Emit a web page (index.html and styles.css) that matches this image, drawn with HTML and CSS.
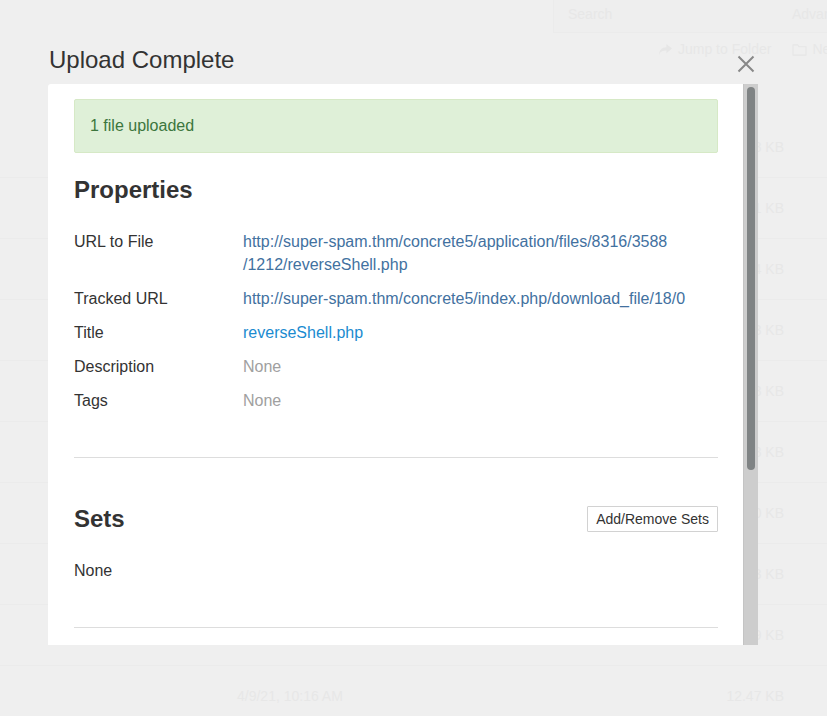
FILE: index.html
```html
<!DOCTYPE html>
<html>
<head>
<meta charset="utf-8">
<link rel="stylesheet" href="styles.css">
</head>
<body>
<div class="page">
  <div class="topbar">
    <div class="search">
      <span class="search-text">Search</span>
      <span>Advanced</span>
    </div>
  </div>
  <div class="toolbar">
    <span class="tool">
      <svg width="15" height="13" viewBox="0 0 16 14"><path d="M9 1 L15 6 L9 11 L9 8 C5 8 2 9 1 13 C1 8 4 4.5 9 4.5 Z" fill="#e6e6e6"/></svg>
      Jump to Folder
    </span>
    <span class="tool">
      <svg width="15" height="13" viewBox="0 0 16 14"><path d="M1 2 H6 L7.5 4 H15 V13 H1 Z" fill="none" stroke="#e6e6e6" stroke-width="1.2"/></svg>
      New Folder
    </span>
  </div>
  <div class="rows">
    <div class="frow"><span class="date hidden">4/9/21, 10:16 AM</span><span class="size">11.08 KB</span></div>
    <div class="frow"><span class="date hidden">4/9/21, 10:16 AM</span><span class="size">14.31 KB</span></div>
    <div class="frow"><span class="date hidden">4/9/21, 10:16 AM</span><span class="size">10.84 KB</span></div>
    <div class="frow"><span class="date hidden">4/9/21, 10:16 AM</span><span class="size">12.93 KB</span></div>
    <div class="frow"><span class="date hidden">4/9/21, 10:16 AM</span><span class="size">13.08 KB</span></div>
    <div class="frow"><span class="date hidden">4/9/21, 10:16 AM</span><span class="size">15.28 KB</span></div>
    <div class="frow"><span class="date hidden">4/9/21, 10:16 AM</span><span class="size">12.70 KB</span></div>
    <div class="frow"><span class="date hidden">4/9/21, 10:16 AM</span><span class="size">11.43 KB</span></div>
    <div class="frow"><span class="date hidden">4/9/21, 10:16 AM</span><span class="size">13.69 KB</span></div>
    <div class="frow last"><span class="date">4/9/21, 10:16 AM</span><span class="size">12.47 KB</span></div>
  </div>
</div>

<div class="modal">
  <div class="modal-header">
    <h2 class="modal-title">Upload Complete</h2>
    <svg class="close" width="18" height="18" viewBox="0 0 18 18"><path d="M1.5 1.5 L16.5 16.5 M16.5 1.5 L1.5 16.5" stroke="#888" stroke-width="2" fill="none"/></svg>
  </div>
  <div class="modal-body">
    <div class="content">
      <div class="alert">1 file uploaded</div>
      <h3 class="section-title">Properties</h3>
      <div class="prop">
        <div class="label">URL to File</div>
        <div class="value"><a class="link">http://super-spam.thm/concrete5/application/files/8316/3588<wbr>/1212/reverseShell.php</a></div>
      </div>
      <div class="prop">
        <div class="label">Tracked URL</div>
        <div class="value"><a class="link">http://super-spam.thm/concrete5/index.php/download_file/18/0</a></div>
      </div>
      <div class="prop">
        <div class="label">Title</div>
        <div class="value"><a class="link editable">reverseShell.php</a></div>
      </div>
      <div class="prop">
        <div class="label">Description</div>
        <div class="value muted">None</div>
      </div>
      <div class="prop">
        <div class="label">Tags</div>
        <div class="value muted">None</div>
      </div>
      <hr class="divider first">
      <div class="sets-head">
        <h3 class="section-title">Sets</h3>
        <button class="btn">Add/Remove Sets</button>
      </div>
      <div class="sets-none">None</div>
      <hr class="divider second">
    </div>
    <div class="scrollbar"><div class="thumb"></div></div>
  </div>
</div>
</body>
</html>
```
FILE: styles.css
```css
html, body {
  margin: 0;
  padding: 0;
}
body {
  background: #efefef;
  font-family: "Liberation Sans", Arial, sans-serif;
  color: #333;
  position: relative;
  width: 827px;
  height: 716px;
  overflow: hidden;
}

/* faint background page */
.page {
  color: #e7e7e7;
  font-size: 14px;
  width: 827px;
}
.topbar {
  display: flex;
  justify-content: flex-end;
  height: 34px;
}
.search {
  width: 274px;
  height: 33px;
  border-left: 1px solid #ebebeb;
  border-bottom: 1px solid #ebebeb;
  background: #eeeeee;
  display: flex;
  align-items: center;
  padding: 0 0 4px 14px;
  box-sizing: border-box;
  white-space: nowrap;
  overflow: hidden;
}
.search-text {
  width: 224px;
  flex: none;
}
.toolbar {
  display: flex;
  justify-content: flex-start;
  gap: 21px;
  height: 30px;
  align-items: center;
  padding-left: 658px;
  white-space: nowrap;
  overflow: hidden;
}
.tool {
  display: flex;
  align-items: center;
  gap: 5px;
  flex: none;
}
.rows {
  margin-top: 53px;
}
.frow {
  height: 60px;
  border-bottom: 1px solid #ebebeb;
  display: flex;
  align-items: center;
  white-space: nowrap;
}
.hidden {
  visibility: hidden;
}
.frow.last {
  border-bottom: none;
  border-top: 1px solid #ebebeb;
  margin-top: -1px;
}
.date {
  margin-left: 237px;
}
.size {
  margin-left: auto;
  margin-right: 43px;
}

/* modal */
.modal {
  position: absolute;
  top: 0;
  left: 48px;
  width: 710px;
}
.modal-header {
  display: flex;
  justify-content: space-between;
  align-items: flex-start;
  height: 84px;
  box-sizing: border-box;
  padding: 46px 3px 0 1px;
}
.modal-title {
  margin: 0;
  font-size: 24px;
  line-height: 28px;
  font-weight: normal;
  color: #333;
}
.close {
  margin-top: 9px;
}
.modal-body {
  display: flex;
  background: #fff;
  height: 561px;
  border-radius: 3px 0 0 0;
}
.content {
  flex: 1;
  padding: 15px 25px 0 26px;
  overflow: hidden;
  font-size: 16px;
  line-height: 23px;
}
.alert {
  background: #dff0d8;
  border: 1px solid #d6e9c6;
  color: #3c763d;
  padding: 15px 15px;
  line-height: 22px;
  border-radius: 2px;
}
.section-title {
  margin: 0;
  font-size: 24px;
  line-height: 26px;
  font-weight: bold;
  color: #333;
}
.alert + .section-title {
  margin-top: 24px;
  margin-bottom: 27px;
}
.prop {
  display: grid;
  grid-template-columns: 169px 1fr;
  margin-bottom: 11px;
}
.label {
  color: #333;
}
.link {
  color: #42719f;
  text-decoration: none;
}
.editable {
  color: #1b8bd0;
}
.muted {
  color: #a0a0a0;
}
.divider {
  border: none;
  border-top: 1px solid #dddddd;
  margin: 0;
}
.divider.first {
  margin-top: 45px;
}
.sets-head {
  display: flex;
  justify-content: space-between;
  align-items: center;
  margin-top: 48px;
}
.btn {
  font-family: "Liberation Sans", Arial, sans-serif;
  font-size: 14px;
  color: #333;
  background: #fff;
  border: 1px solid #d2d2d2;
  height: 26px;
  padding: 0 8px;
  line-height: 24px;
  border-radius: 1px;
}
.sets-none {
  margin-top: 27px;
  color: #333;
}
.divider.second {
  margin-top: 45px;
}
.scrollbar {
  width: 15px;
  background: #cdcdcd;
  border-left: 1px solid #c4c4c4;
  box-sizing: border-box;
  padding: 3px 3px 0 3px;
}
.thumb {
  height: 383px;
  background: #7f8384;
  border-radius: 4px;
}
```
